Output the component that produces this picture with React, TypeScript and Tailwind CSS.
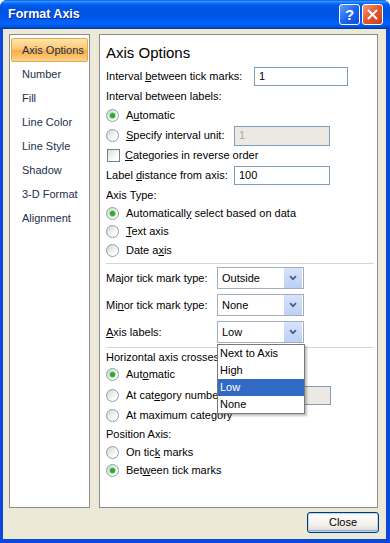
import { ReactNode } from 'react';

const Radio = ({ checked }: { checked?: boolean }) => (
  <span className="flex h-[13px] w-[13px] shrink-0 items-center justify-center rounded-full border border-[#8a9db3] bg-[linear-gradient(135deg,#d4d4cd,#ffffff_75%)]">
    {checked && (
      <span className="h-[5px] w-[5px] rounded-full bg-[#2fa82f] shadow-[0_0_1px_1px_#9fdc9f]" />
    )}
  </span>
);

const RadioRow = ({ checked, h, children }: { checked?: boolean; h: string; children: ReactNode }) => (
  <div className={`flex items-center gap-[7px] ${h}`}>
    <Radio checked={checked} />
    <span>{children}</span>
  </div>
);

const TextBox = ({ value, w, h, disabled }: { value?: string; w: string; h: string; disabled?: boolean }) => (
  <div
    className={`flex items-center border border-[#7f9db9] pl-[4px] ${w} ${h} ${
      disabled ? 'bg-[#ebe9e1] text-[#a9a79c]' : 'bg-white'
    }`}>
    {value}
  </div>
);

const Select = ({ value }: { value: string }) => (
  <div className="flex h-[22px] w-[87px] items-center border border-[#a5adb8] bg-white pl-[4px]">
    <span className="flex-1">{value}</span>
    <span className="mr-px flex h-[20px] w-[18px] items-center justify-center bg-[linear-gradient(to_bottom,#d7e3fb,#bccff5)]">
      <svg width="8" height="6" viewBox="0 0 8 6">
        <path d="M1 1.2 L4 4.2 L7 1.2" fill="none" stroke="#4b5f85" strokeWidth="1.8" />
      </svg>
    </span>
  </div>
);

const Separator = ({ pt, pb }: { pt: string; pb: string }) => (
  <div className={`${pt} ${pb} pr-[3px]`}>
    <div className="h-px bg-[#d5d5d5]" />
  </div>
);

const navItems = ['Axis Options', 'Number', 'Fill', 'Line Color', 'Line Style', 'Shadow', '3-D Format', 'Alignment'];

export default function App() {
  return (
    <div className="flex h-[543px] w-[390px] flex-col overflow-hidden rounded-t-[7px] bg-[#0a48dc] font-['Liberation_Sans',Arial,sans-serif] text-[11px] text-black">
      {/* title bar */}
      <div className="flex h-[29px] shrink-0 items-center bg-[linear-gradient(to_bottom,#0058ee_0%,#3593ff_5%,#1a80ff_9%,#0467fb_13%,#0057e5_22%,#0054e3_40%,#0055eb_58%,#005bf5_68%,#0264fa_80%,#0058e9_90%,#0047c2_96%,#003396_100%)] pl-[8px] pr-[7px]">
        <span className="text-[12.5px] font-bold text-white [text-shadow:1px_1px_0_#0a2a8a]">Format Axis</span>
        <div className="ml-auto flex gap-[2px]">
          <div className="flex h-[21px] w-[21px] items-center justify-center rounded-[3px] border border-white bg-[linear-gradient(135deg,#5ea0ff,#1b62ec_55%,#0d4bd6)] text-[15px] font-bold leading-none text-white">
            ?
          </div>
          <div className="flex h-[21px] w-[21px] items-center justify-center rounded-[3px] border border-white bg-[linear-gradient(135deg,#f39a7e,#e0572f_50%,#c8401c)]">
            <svg width="11" height="11" viewBox="0 0 11 11">
              <path d="M1.5 1.5 L9.5 9.5 M9.5 1.5 L1.5 9.5" stroke="white" strokeWidth="2" strokeLinecap="round" />
            </svg>
          </div>
        </div>
      </div>

      {/* body */}
      <div className="mb-[4px] ml-[3px] mr-[4px] flex flex-1 flex-col bg-[#ece9d8] pt-[5px]">
        <div className="flex h-[474px]">
          {/* left nav */}
          <div className="ml-[6px] w-[81px] border border-[#8c8c8c] bg-white pt-[3px]">
            {navItems.map((item, i) => (
              <div
                key={item}
                className={
                  i === 0
                    ? 'mx-px flex h-[24px] items-center rounded-[2px] border border-[#e0a94c] bg-[linear-gradient(to_bottom,#fee5ad,#fcc873_45%,#f9ad45_55%,#fcd38d)] pl-[10px] text-[#1c2f4d]'
                    : 'mx-px flex h-[24px] items-center pl-[11px] text-[#1c2f4d]'
                }>
                {item}
              </div>
            ))}
          </div>

          {/* right panel */}
          <div className="relative ml-[9px] flex w-[279px] flex-col border border-[#8c8c8c] bg-white pl-[6px]">
            <div className="mt-[9px] flex h-[19px] items-center text-[15px]">Axis Options</div>

            <div className="mt-[2px] flex h-[22px] items-center">
              <span className="w-[148px]">
                Interval <u>b</u>etween tick marks:
              </span>
              <TextBox value="1" w="w-[94px]" h="h-[19px]" />
            </div>

            <div className="flex h-[18px] items-center">Interval between labels:</div>
            <RadioRow checked h="h-[20px]">
              A<u>u</u>tomatic
            </RadioRow>
            <div className="flex h-[21px] items-center">
              <div className="flex w-[128px] items-center gap-[7px]">
                <Radio />
                <span>
                  <u>S</u>pecify interval unit:
                </span>
              </div>
              <TextBox value="1" w="w-[96px]" h="h-[20px]" disabled />
            </div>
            <div className="flex h-[19px] items-center gap-[5px]">
              <span className="ml-px h-[13px] w-[13px] border border-[#6f8196] bg-[linear-gradient(135deg,#dcdcd5,#ffffff_75%)]" />
              <span>
                <u>C</u>ategories in reverse order
              </span>
            </div>
            <div className="flex h-[21px] items-center">
              <span className="w-[128px]">
                Label <u>d</u>istance from axis:
              </span>
              <TextBox value="100" w="w-[96px]" h="h-[19px]" />
            </div>

            <div className="flex h-[18px] items-center">Axis Type:</div>
            <RadioRow checked h="h-[18px]">
              Automaticall<u>y</u> select based on data
            </RadioRow>
            <RadioRow h="h-[19px]">
              <u>T</u>ext axis
            </RadioRow>
            <RadioRow h="h-[19px]">
              Date a<u>x</u>is
            </RadioRow>

            <Separator pt="pt-[3px]" pb="pb-[3px]" />

            <div className="flex h-[22px] items-center">
              <span className="w-[111px]">
                Ma<u>j</u>or tick mark type:
              </span>
              <Select value="Outside" />
            </div>
            <div className="mt-[5px] flex h-[22px] items-center">
              <span className="w-[111px]">
                Mi<u>n</u>or tick mark type:
              </span>
              <Select value="None" />
            </div>
            <div className="mt-[5px] flex h-[22px] items-center">
              <span className="w-[111px]">
                <u>A</u>xis labels:
              </span>
              <Select value="Low" />
            </div>

            <Separator pt="pt-[4px]" pb="pb-[2px]" />

            <div className="flex h-[15px] items-center">Horizontal axis crosses:</div>
            <RadioRow checked h="h-[19px]">
              Aut<u>o</u>matic
            </RadioRow>
            <div className="flex h-[22px] items-center">
              <div className="flex w-[128px] items-center gap-[7px]">
                <Radio />
                <span>
                  At cat<u>e</u>gory number:
                </span>
              </div>
              <TextBox w="w-[97px]" h="h-[19px]" disabled />
            </div>
            <RadioRow h="h-[19px]">
              At maximum cate<u>g</u>ory
            </RadioRow>

            <div className="flex h-[18px] items-center">Position Axis:</div>
            <RadioRow h="h-[18px]">
              On tic<u>k</u> marks
            </RadioRow>
            <RadioRow checked h="h-[18px]">
              Bet<u>w</u>een tick marks
            </RadioRow>

            {/* open dropdown list */}
            <div className="absolute left-[117px] top-[309px] w-[88px] border border-[#7a7a7a] bg-white shadow-[2px_2px_2px_rgba(0,0,0,0.25)]">
              <div className="flex h-[17px] items-center pl-[2px]">Next to Axis</div>
              <div className="flex h-[17px] items-center pl-[2px]">High</div>
              <div className="flex h-[17px] items-center bg-[#316ac5] pl-[2px] text-white">Low</div>
              <div className="flex h-[17px] items-center pl-[2px]">None</div>
            </div>
          </div>
        </div>

        {/* footer */}
        <div className="mr-[7px] mt-[4px] flex justify-end">
          <button className="flex h-[21px] w-[72px] items-center justify-center rounded-[3px] border border-[#003c74] bg-[linear-gradient(to_bottom,#ffffff,#f3f2ec_60%,#dcd7cb)] text-[11px] shadow-[inset_0_0_0_1px_#bcd4f6,inset_0_-1px_0_1px_#89ade4]">
            Close
          </button>
        </div>
      </div>
    </div>
  );
}
